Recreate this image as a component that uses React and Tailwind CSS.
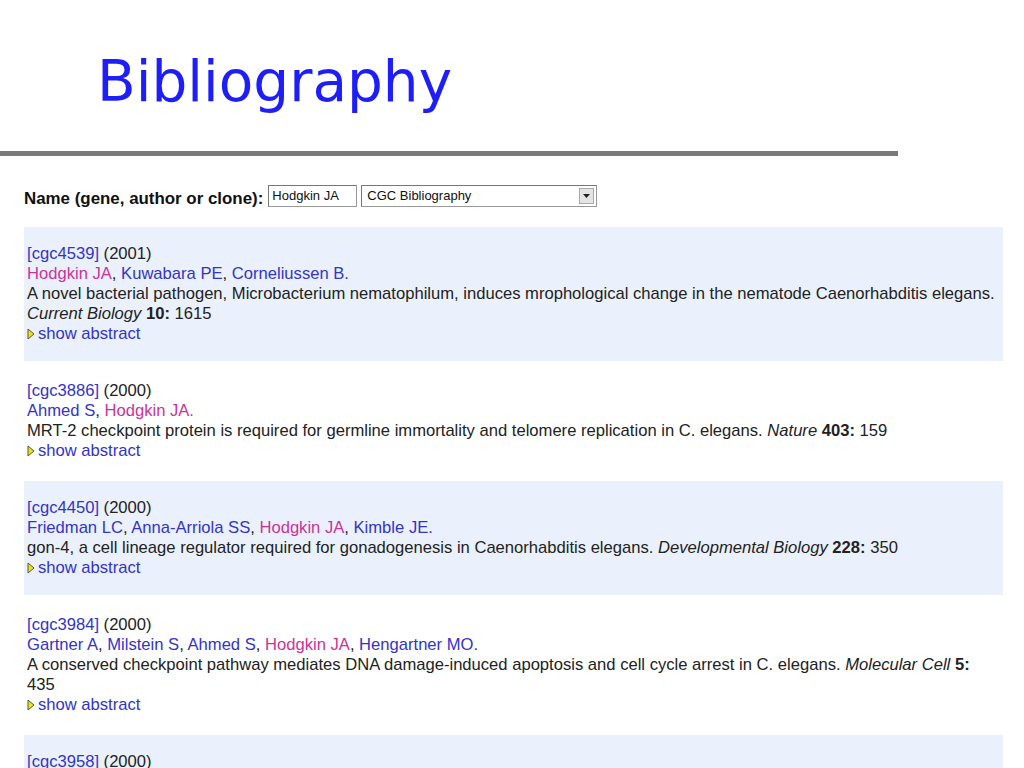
import React from "react";

const entries = [
  {
    id: "cgc4539",
    year: "2001",
    authors: ["Hodgkin JA", "Kuwabara PE", "Corneliussen B."],
    title:
      "A novel bacterial pathogen, Microbacterium nematophilum, induces mrophological change in the nematode Caenorhabditis elegans.",
    journal: "Current Biology",
    vol: "10:",
    page: "1615",
    breakJournal: true,
  },
  {
    id: "cgc3886",
    year: "2000",
    authors: ["Ahmed S", "Hodgkin JA."],
    title:
      "MRT-2 checkpoint protein is required for germline immortality and telomere replication in C. elegans.",
    journal: "Nature",
    vol: "403:",
    page: "159",
  },
  {
    id: "cgc4450",
    year: "2000",
    authors: ["Friedman LC", "Anna-Arriola SS", "Hodgkin JA", "Kimble JE."],
    title:
      "gon-4, a cell lineage regulator required for gonadogenesis in Caenorhabditis elegans.",
    journal: "Developmental Biology",
    vol: "228:",
    page: "350",
  },
  {
    id: "cgc3984",
    year: "2000",
    authors: ["Gartner A", "Milstein S", "Ahmed S", "Hodgkin JA", "Hengartner MO."],
    title:
      "A conserved checkpoint pathway mediates DNA damage-induced apoptosis and cell cycle arrest in C. elegans.",
    journal: "Molecular Cell",
    vol: "5:",
    page: "435",
  },
  {
    id: "cgc3958",
    year: "2000",
    authors: ["Hodgkin JA."],
    title: "",
    journal: "",
    vol: "",
    page: "",
  },
];

function Arrow() {
  return (
    <svg width="8" height="12" viewBox="0 0 8 12" className="inline-block mr-[3px] -mt-[2px] align-middle">
      <path d="M1 1 L7 6 L1 11 Z" fill="#f2e600" stroke="#555" strokeWidth="1" />
    </svg>
  );
}

function Entry({ e, shaded }) {
  return (
    <div className={(shaded ? "bg-[#eaf1fc] " : "") + "px-[3px] py-[17px] leading-[20px]"}>
      <div>
        <a className="text-[#3333cc]">[{e.id}]</a> ({e.year})
      </div>
      <div>
        {e.authors.map((a, i) => (
          <span key={i}>
            <a className={a.startsWith("Hodgkin") ? "text-[#cc3399]" : "text-[#3333cc]"}>{a}</a>
            {i < e.authors.length - 1 ? ", " : ""}
          </span>
        ))}
      </div>
      {e.title && (
        <div>
          {e.title}
          {e.breakJournal ? <br /> : " "}
          <i>{e.journal}</i> <b>{e.vol}</b> {e.page}
        </div>
      )}
      <div className="text-[#3333cc]">
        <Arrow />
        show abstract
      </div>
    </div>
  );
}

export default function App() {
  return (
    <div className="w-[1024px] h-[768px] overflow-hidden bg-white text-[#222] font-['Liberation_Sans',Arial,sans-serif] text-[16.6px]">
      {/* title */}
      <div className="pt-[42px] pl-[97px] h-[151px]">
        <h1 className="font-['DejaVu_Sans',sans-serif] text-[#1e1efa] text-[56.5px] leading-[80px]">
          Bibliography
        </h1>
      </div>
      <div className="w-[898px] h-[5px] bg-[#7a7a7a]" />

      {/* search form */}
      <div className="flex items-center pl-[24px] mt-[28px] h-[24px]">
        <span className="font-bold text-[16.9px] text-[#111] mt-[6px]">Name (gene, author or clone):</span>
        <div className="ml-[5px] w-[89px] h-[22px] border border-[#999] border-t-[#777] border-l-[#777] bg-white text-[13px] leading-[20px] px-[3px] text-[#111]">
          Hodgkin JA
        </div>
        <div className="ml-[4px] w-[236px] h-[22px] border border-[#999] border-t-[#777] border-l-[#777] bg-white flex items-center text-[13px] text-[#111]">
          <span className="pl-[5px] flex-1">CGC Bibliography</span>
          <div className="w-[15px] h-[16px] mr-[2px] bg-[#e4e4e4] border border-[#aaa] flex items-center justify-center">
            <svg width="7" height="4" viewBox="0 0 7 4">
              <path d="M0 0 H7 L3.5 4 Z" fill="#222" />
            </svg>
          </div>
        </div>
      </div>

      {/* results */}
      <div className="mt-[19px] ml-[24px] w-[979px] flex flex-col gap-[3px]">
        {entries.map((e, i) => (
          <Entry key={e.id} e={e} shaded={i % 2 === 0} />
        ))}
      </div>
    </div>
  );
}
